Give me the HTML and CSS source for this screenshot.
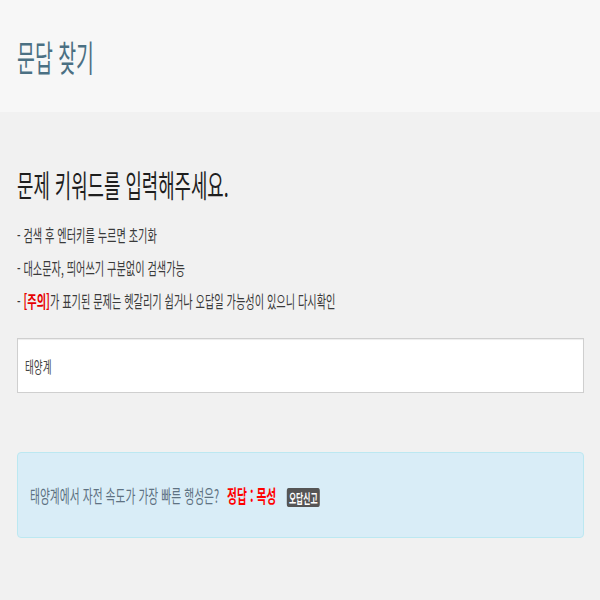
FILE: index.html
```html
<!DOCTYPE html>
<html lang="ko">
  <head>
    <meta charset="UTF-8" />
    <meta name="viewport" content="width=device-width, initial-scale=1.0" />
    <title>문답 찾기</title>
    <link rel="stylesheet" href="styles.css">
  </head>
  <body>
    <header class="top">
      <h1 class="narrow title">문답 찾기</h1>
    </header>
    <main class="content">
      <h2 class="narrow lead">문제 키워드를 입력해주세요.</h2>
      <ul class="notes">
        <li><span class="narrow">- 검색 후 엔터키를 누르면 초기화</span></li>
        <li><span class="narrow">- 대소문자, 띄어쓰기 구분없이 검색가능</span></li>
        <li><span class="narrow">- <strong class="warn">[주의]</strong>가 표기된 문제는 헷갈리기 쉽거나 오답일 가능성이 있으니 다시확인</span></li>
      </ul>
      <div class="search" id="keyword"><span class="narrow">태양계</span></div>
      <div class="result">
        <span class="narrow">
          <span class="question">태양계에서 자전 속도가 가장 빠른 행성은?</span>
          <span class="answer">정답 : 목성</span>
          <button type="button" class="report">오답신고</button>
        </span>
      </div>
    </main>
  </body>
</html>
```

FILE: styles.css
```css
:root {
  --title-color: #4b7083;
  --text-color: #333;
  --info-bg: #d9edf7;
  --info-border: #bce8f1;
}
html, body {
  margin: 0;
  padding: 0;
  background: #f1f1f1;
}
body {
  font-family: "Noto Sans CJK KR", "Noto Sans", sans-serif;
  color: var(--text-color);
}
/* condensed look of the original face */
.narrow {
  display: inline-block;
  white-space: nowrap;
  transform: scaleX(0.6);
  transform-origin: 0 50%;
}
.top {
  height: 112px;
  background: #f7f7f7;
  display: flex;
  align-items: center;
  padding: 0 17px;
  box-sizing: border-box;
}
.title {
  margin: 0;
  font-size: 36px;
  font-weight: 400;
  color: var(--title-color);
  line-height: 1;
  transform: scaleX(0.54);
}
.content {
  padding: 54px 16px 0 17px;
}
.lead {
  display: block;
  margin: 0;
  font-size: 31px;
  font-weight: 400;
  line-height: 36px;
  color: #1e1e1e;
  transform: scaleX(0.575);
}
.notes {
  list-style: none;
  margin: 16px 0 0;
  padding: 0;
}
.notes li {
  font-size: 17px;
  line-height: 33px;
  color: #3a3a3a;
}
.warn {
  color: #e60000;
  font-weight: 700;
}
.search {
  display: flex;
  align-items: center;
  height: 55px;
  margin-top: 21px;
  padding: 0 7px;
  box-sizing: border-box;
  border: 1px solid #cfcfcf;
  background: #fff;
  box-shadow: inset 0 1px 1px rgba(0, 0, 0, 0.075);
  font-size: 16px;
  color: #444;
}
.result {
  display: flex;
  align-items: center;
  height: 86px;
  margin-top: 59px;
  padding: 0 12px;
  box-sizing: border-box;
  background: var(--info-bg);
  border: 1px solid var(--info-border);
  border-radius: 4px;
  font-size: 18px;
}
.question {
  color: #5e7282;
}
.answer {
  margin-left: 8px;
  color: #f00;
  font-weight: 700;
}
.report {
  margin-left: 12px;
  padding: 1px 4px;
  border: none;
  border-radius: 3px;
  background: #555;
  color: #fff;
  font-family: "Noto Sans CJK KR", "Noto Sans", sans-serif;
  font-size: 13px;
  font-weight: 700;
  line-height: 17px;
}
```
